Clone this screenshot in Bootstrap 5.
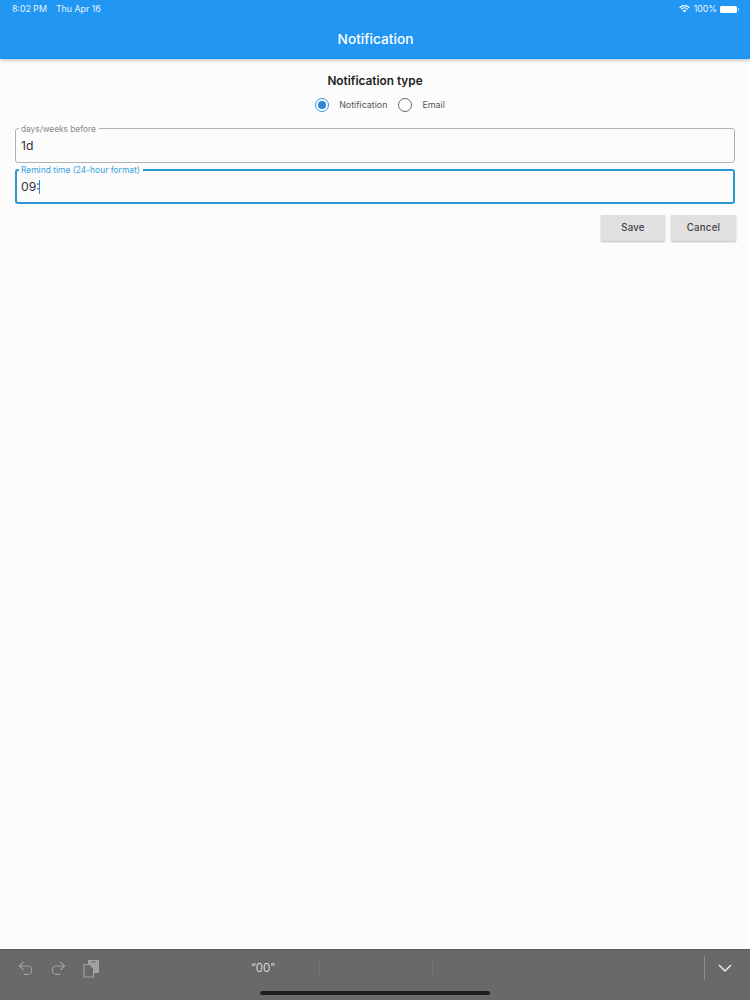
<!DOCTYPE html>
<html lang="en">
<head>
<meta charset="utf-8">
<title>Notification</title>
<link href="https://cdn.jsdelivr.net/npm/bootstrap@5.3.0/dist/css/bootstrap.min.css" rel="stylesheet">
<style>
html,body{height:100%;margin:0}
body{width:750px;height:1000px;overflow:hidden;background:#fcfcfd;font-family:Inter,"Liberation Sans",sans-serif;color:#2b2b2b}
.app-head{height:59px;background:#2196f3;color:#fff;box-shadow:0 1px 4px rgba(0,0,0,.28);position:relative;z-index:1;padding:0 11px 0 12px}
.stat-row{height:17px;font-size:8.8px;color:#e9f4fe;padding-top:1px}
.stat-date{margin-left:9px}
.batt{width:17px;height:7px;background:#fff;border-radius:1.5px;margin-left:3px}
.batt-tip{width:1px;height:3px;background:#a9d5f9;margin-left:1px}
.app-title{font-size:13.7px;font-weight:500;line-height:18px;margin-top:13px}
.form-area{padding:0 15px}
.type-title{font-size:11.8px;font-weight:600;line-height:14px;margin-top:15px;color:#222}
.radio-row{margin-top:10px;height:14px;font-size:8.9px;color:#555;padding-left:10px}
.rd{width:14px;height:14px;border-radius:50%;border:1.6px solid #666;flex:none}
.rd.on{border-color:#2b9ae6;display:flex;align-items:center;justify-content:center}
.rd.on::after{content:"";width:8px;height:8px;border-radius:50%;background:#2f86d6}
.rd-label{margin-left:10px;margin-right:11px}
.rd-label.last{margin-right:0}
.fld{position:relative;height:35px;border:1px solid #b3b3b3;border-radius:3px;margin-top:16px;padding:9px 5px 0;font-size:12.2px;line-height:16px;color:#333}
.fld.act{height:35px;margin-top:6px;border:2px solid #2b97cf;padding:8px 4px 0}
.fld-lab{position:absolute;top:-5px;left:3px;padding:0 3px 0 2px;background:#fcfcfd;font-size:8.3px;line-height:10px;color:#8a8a8a}
.fld.act .fld-lab{left:2px;top:-6px;color:#3a9fdc;font-size:8.45px}
.caret-bar{display:inline-block;width:1.5px;height:14px;margin-left:-1px;background:#2b8fd0;vertical-align:-3px}
.btn-row{margin-top:11px;gap:6px;margin-right:-1px}
.act-btn{width:65px;height:26px;padding:0;background:#e0e0e0;border:0;border-radius:1px;font-size:9.7px;font-weight:500;color:#444;box-shadow:0 1px 2px rgba(0,0,0,.25);letter-spacing:.2px}
.act-btn.first-btn{width:64px}
.act-btn:hover{background:#e0e0e0;color:#444}
.spacer-area{flex:1 1 auto}
.kb-bar{height:51px;background:#69686a;border-top:1px solid #5c5b5d;position:relative;padding:0 18px}
.kb-tools{height:36px}
.tool-ic{display:block;flex:none}
.ic-gap{margin-left:17px}
.sugg{font-size:11.7px;font-weight:300;color:#ececec;line-height:16px;width:112px;text-align:center}
.sugg-wrap{margin-left:107px}
.sep-a{width:1px;height:15px;background:#747375}
.sep-b{width:1px;height:24px;background:#8f8e90;margin-right:13px}
.home-ind{position:absolute;left:260px;bottom:5px;width:230px;height:4px;border-radius:2px;background:#1f1f21}
</style>
</head>
<body class="d-flex flex-column">
<header class="app-head">
  <div class="stat-row d-flex justify-content-between align-items-center">
    <div><span>8:02 PM</span><span class="stat-date">Thu Apr 16</span></div>
    <div class="d-flex align-items-center">
      <svg width="11" height="8" viewBox="0 0 11 8" class="me-1"><path d="M.6 2.7A7 7 0 0 1 10.4 2.7M2.2 4.3A4.7 4.7 0 0 1 8.8 4.3" fill="none" stroke="#fff" stroke-width="1.2"/><path d="M3.7 5.6a2.5 2.5 0 0 1 3.6 0L5.5 7.6z" fill="#fff"/></svg>
      <span>100%</span><span class="batt"></span><span class="batt-tip"></span>
    </div>
  </div>
  <div class="app-title text-center">Notification</div>
</header>
<main class="form-area">
  <div class="type-title text-center">Notification type</div>
  <div class="radio-row d-flex justify-content-center align-items-center">
    <span class="rd on"></span><span class="rd-label">Notification</span>
    <span class="rd"></span><span class="rd-label last">Email</span>
  </div>
  <div class="fld"><span class="fld-lab">days/weeks before</span>1d</div>
  <div class="fld act"><span class="fld-lab">Remind time (24-hour format)</span>09:<span class="caret-bar"></span></div>
  <div class="btn-row d-flex justify-content-end">
    <button type="button" class="btn act-btn first-btn">Save</button>
    <button type="button" class="btn act-btn">Cancel</button>
  </div>
</main>
<div class="spacer-area"></div>
<footer class="kb-bar">
  <div class="kb-tools d-flex align-items-center">
    <svg class="tool-ic" width="16" height="16" viewBox="0 0 16 16" fill="none" stroke="#a3a2a4" stroke-width="1.1"><path d="M5.5 2 1.5 6l4 4"/><path d="M1.5 6h8a4.2 4.2 0 0 1 0 8.4H6"/></svg>
    <svg class="tool-ic ms-3" width="16" height="16" viewBox="0 0 16 16" fill="none" stroke="#a3a2a4" stroke-width="1.1"><path d="M10.5 2l4 4-4 4"/><path d="M14.5 6h-8a4.2 4.2 0 0 0 0 8.4H10"/></svg>
    <svg class="tool-ic ic-gap" width="17" height="19" viewBox="0 0 17 19"><path d="M5 1h11v13H5z" fill="#a3a2a4"/><path d="M8 3h5" stroke="#69686a" stroke-width="1"/><path d="M1 5.5h6l3.5 3.5v9H1z" fill="#69686a" stroke="#a3a2a4" stroke-width="1.1"/></svg>
    <div class="sugg-wrap d-flex align-items-center">
      <span class="sugg">“00”</span><span class="sep-a"></span><span class="sugg"></span><span class="sep-a"></span>
    </div>
    <div class="ms-auto d-flex align-items-center">
      <span class="sep-b"></span>
      <svg width="14" height="8" viewBox="0 0 14 8" fill="none" stroke="#f2f2f2" stroke-width="1.4"><path d="M1 1l6 6 6-6"/></svg>
    </div>
  </div>
  <div class="home-ind"></div>
</footer>
</body>
</html>
